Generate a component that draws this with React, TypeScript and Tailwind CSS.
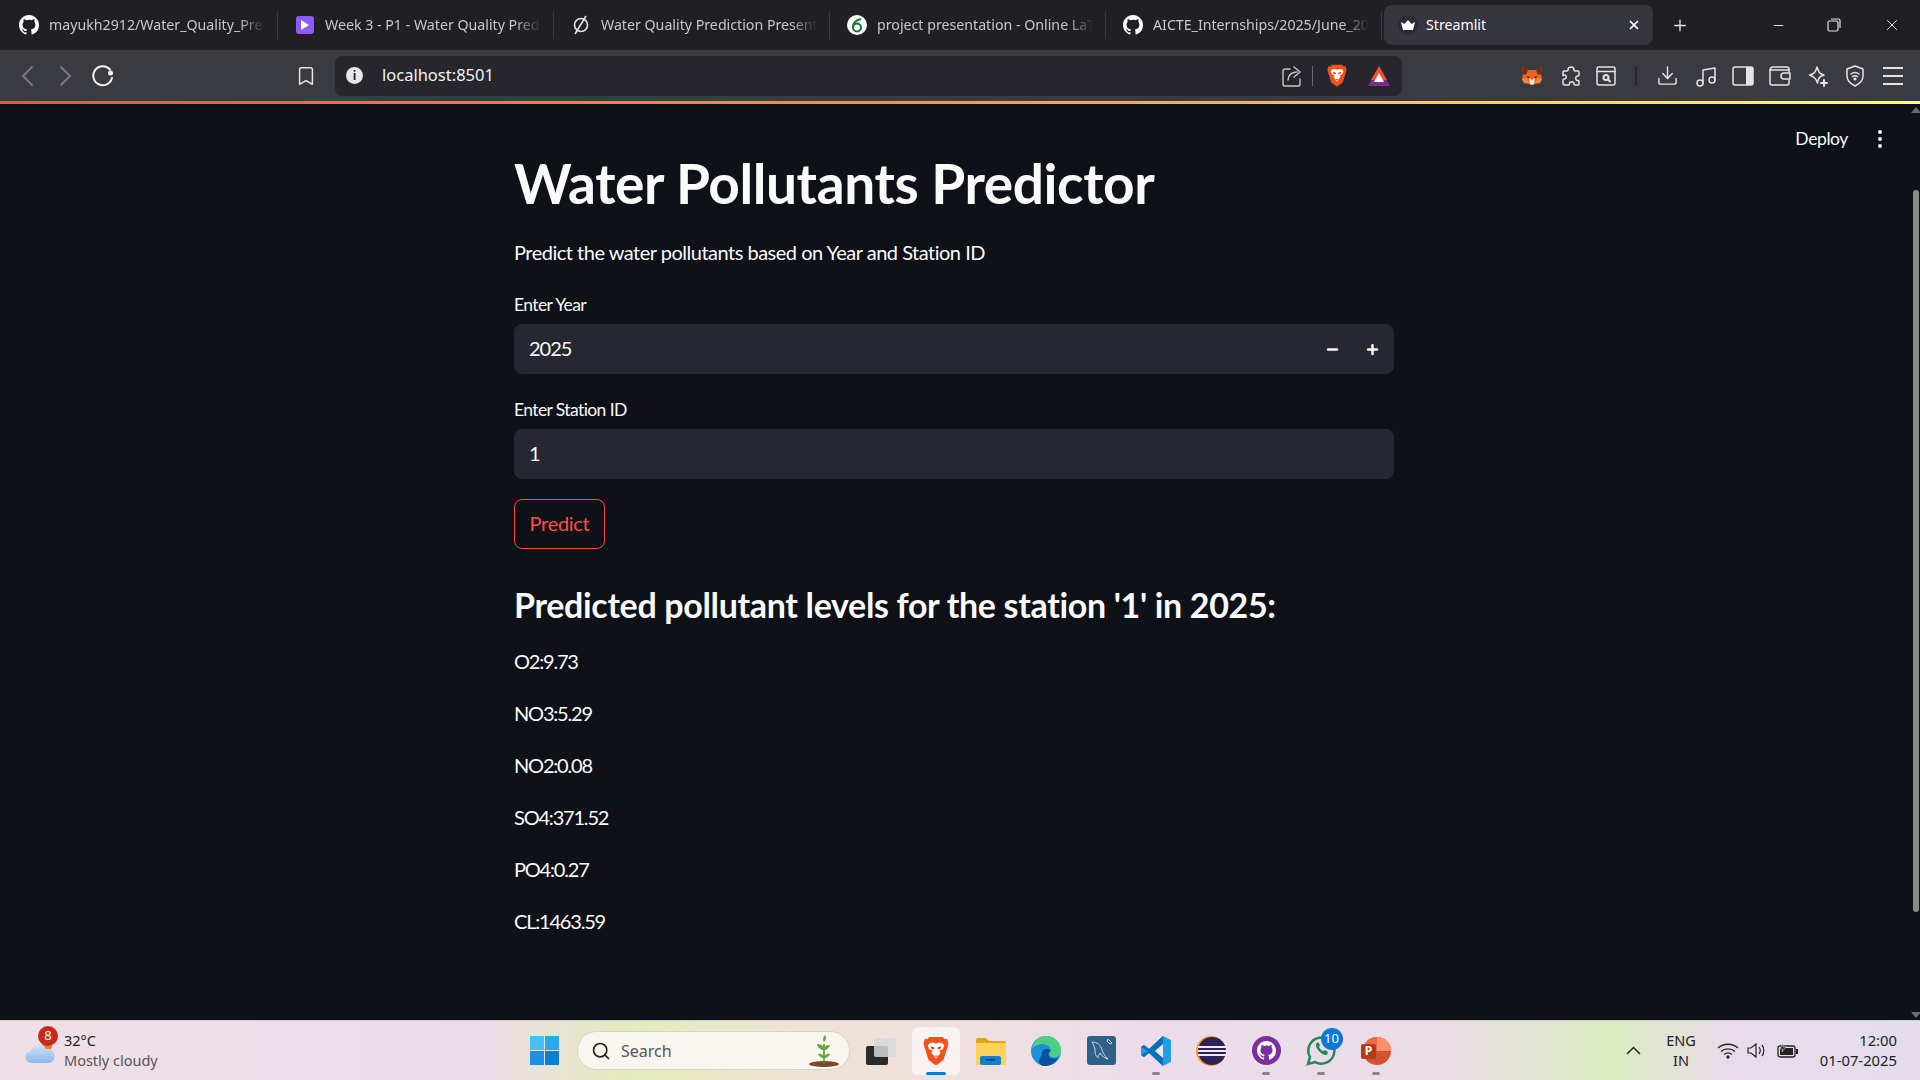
import { Bookmark, Download, Minus, Plus, Search, X } from "lucide-react";
import type { ReactNode } from "react";

const ui = "font-['Noto_Sans',sans-serif]";
const pollutants = ["O2:9.73", "NO3:5.29", "NO2:0.08", "SO4:371.52", "PO4:0.27", "CL:1463.59"];

function GithubMark({ size = 20 }: { size?: number }) {
  return (
    <svg width={size} height={size} viewBox="0 0 16 16" fill="#fff">
      <path d="M8 0C3.58 0 0 3.58 0 8c0 3.54 2.29 6.53 5.47 7.59.4.07.55-.17.55-.38v-1.34c-2.23.48-2.7-1.07-2.7-1.07-.36-.92-.89-1.17-.89-1.17-.73-.5.05-.49.05-.49.8.06 1.23.82 1.23.82.72 1.22 1.87.87 2.33.66.07-.52.28-.87.51-1.07-1.78-.2-3.64-.89-3.64-3.95 0-.87.31-1.59.82-2.15-.08-.2-.36-1.02.08-2.12 0 0 .67-.21 2.2.82A7.6 7.6 0 0 1 8 3.87c.68 0 1.36.09 2 .27 1.53-1.04 2.2-.82 2.2-.82.44 1.1.16 1.92.08 2.12.51.56.82 1.27.82 2.15 0 3.07-1.87 3.75-3.65 3.95.29.25.54.73.54 1.48v2.2c0 .21.15.46.55.38A8 8 0 0 0 16 8c0-4.42-3.58-8-8-8z" />
    </svg>
  );
}

function BraveLogo({ size = 24 }: { size?: number }) {
  return (
    <svg width={size} height={size * 1.14} viewBox="0 0 28 32">
      <path d="M7 1h14l2.500 2.500L26 3l1.500 5-1 4-4.500 14-8 6-8-6L1.500 12l-1-4L2 3l2.500.5z" fill="#f4501e" />
      <path d="M14 8l3-1 4 .5 2 3-2 4-3.500 1.500 1.500 2-4 5-1 2-1-2-4-5 1.500-2L7 14.500l-2-4 2-3 4-.5z" fill="#fff" />
      <path d="M8 11l4 1 .5 2-3 .5zM20 11l-4 1-.5 2 3 .5z" fill="#f4501e" />
      <path d="M12 21h4l-2 2z" fill="#f4501e" />
    </svg>
  );
}

function TabIcon({ kind }: { kind: string }) {
  if (kind === "github") return <GithubMark />;
  if (kind === "video")
    return (
      <span className="flex h-[18px] w-[18px] items-center justify-center rounded-[3px] bg-[#8b5cf6]">
        <svg width="10" height="12" viewBox="0 0 10 12">
          <path d="M1 1l8 5-8 5z" fill="#fff" />
        </svg>
      </span>
    );
  if (kind === "slash")
    return (
      <svg width="20" height="22" viewBox="0 0 20 22" fill="none" stroke="#e5e5e5" strokeWidth="1.6">
        <circle cx="10" cy="11" r="6.500" />
        <path d="M15 2L4 20" />
      </svg>
    );
  if (kind === "overleaf")
    return (
      <span className="flex h-5 w-5 items-center justify-center rounded-full bg-white">
        <svg width="12" height="15" viewBox="0 0 12 15" fill="none" stroke="#13773a" strokeWidth="2">
          <circle cx="6" cy="9.500" r="4" />
          <path d="M10 1C5 2 2 5 2 9.500" />
        </svg>
      </span>
    );
  return (
    <span className="flex h-5 w-5 items-center justify-center rounded-full bg-[#2b2c38]">
      <svg width="14" height="10" viewBox="0 0 14 10">
        <path d="M0 2l3.500 2L7 0l3.500 4L14 2l-2 8H2z" fill="#fff" />
      </svg>
    </span>
  );
}

function Tab({ icon, title, active }: { icon: string; title: string; active?: boolean }) {
  if (active) {
    return (
      <div className="ml-[2px] flex h-10 w-[269px] items-center rounded-lg bg-[#36363f] pl-[14px] pr-3">
        <TabIcon kind={icon} />
        <span className="ml-2 flex-1 text-[14.200px] text-white">{title}</span>
        <X size={14} strokeWidth={3} color="#fff" />
      </div>
    );
  }
  return (
    <div className="flex h-[28px] w-[276px] items-center border-r border-[#3a3a42] pl-[17px] pr-[12px]">
      <span className="flex w-5 shrink-0 justify-center">
        <TabIcon kind={icon} />
      </span>
      <span className="ml-[10px] overflow-hidden whitespace-nowrap text-[14.200px] text-[#c8c8cc] [mask-image:linear-gradient(to_right,black_88%,transparent)]">
        {title}
      </span>
    </div>
  );
}

function Slot({ children }: { children: ReactNode }) {
  return <span className="flex w-[37.500px] shrink-0 justify-center">{children}</span>;
}

function Fox() {
  return (
    <svg width="22" height="21" viewBox="0 0 22 21">
      <path d="M1 1l6 4h8l6-4-1 8 1 5-2 4-5 1-3 1-3-1-5-1-2-4 1-5z" fill="#f0641f" />
      <path d="M1 1l6 4-2 5-3-1zM21 1l-6 4 2 5 3-1z" fill="#6e2c10" />
      <path d="M8 13l3 2 3-2-1 6-2 1-2-1z" fill="#f6e6d8" />
      <path d="M6 11l3 1-2 1.500zM16 11l-3 1 2 1.500z" fill="#2a2018" />
      <path d="M1 14l5-1 2 5-5 0zM21 14l-5-1-2 5 5 0z" fill="#f58a3a" />
    </svg>
  );
}

function ToolbarIcons() {
  const stroke = { fill: "none", stroke: "#e4e4e8", strokeWidth: 1.500, strokeLinecap: "round" as const, strokeLinejoin: "round" as const };
  return (
    <div className="ml-[111px] flex items-center">
      <Slot>
        <Fox />
      </Slot>
      <Slot>
        <span className="ml-[3px] flex">
          <svg width="22" height="22" viewBox="0 0 22 22" {...stroke}>
            <path d="M8 5c0-4 6-4 6 0 0 1 .5 1 1 1h3c1 0 1 1 1 1v3c0 1-.5 1-1 1-3-.5-3 5 0 4.500 .5 0 1 .5 1 1V19c0 1-1 1-1 1h-3c-1 0-1-.5-1-1 .5-3-5-3-4.500 0 0 .5-.5 1-1 1H5c-1 0-2-1-2-2v-3c0-1 .5-1 1-1 3 .5 3-4.500 0-4C3.500 11 3 11 3 10V7c0-1 1-1 1-1h3c.5 0 1 0 1-1z" />
          </svg>
        </span>
      </Slot>
      <span className="flex w-[36px] shrink-0 justify-center">
        <svg width="22" height="22" viewBox="0 0 22 22" {...stroke}>
          <rect x="2" y="2" width="18" height="18" rx="2" />
          <path d="M2 6.500h18" />
          <circle cx="11" cy="12.500" r="2.500" strokeWidth="2" />
          <path d="M13 14.500l2 2" strokeWidth="2" />
        </svg>
      </span>
      <span className="ml-[11px] mr-[12px] h-5 w-[2px] bg-[#26262b]" />
      <Slot>
        <Download size={23} color="#e4e4e8" strokeWidth={1.500} />
      </Slot>
      <Slot>
        <span className="ml-[2px] flex">
          <svg width="22" height="22" viewBox="0 0 22 22" {...stroke}>
            <circle cx="5" cy="18" r="3" />
            <circle cx="17" cy="15" r="3" />
            <path d="M8 18V5l12-2v12" />
          </svg>
        </span>
      </Slot>
      <Slot>
        <svg width="22" height="20" viewBox="0 0 22 20">
          <rect x="1" y="1" width="20" height="18" rx="2" fill="none" stroke="#e4e4e8" strokeWidth="1.500" />
          <path d="M14 1h5a2 2 0 0 1 2 2v14a2 2 0 0 1-2 2h-5z" fill="#e4e4e8" />
        </svg>
      </Slot>
      <Slot>
        <svg width="22" height="20" viewBox="0 0 22 20" {...stroke}>
          <path d="M20 4V3a2 2 0 0 0-2-2H4a3 3 0 0 0-3 3v13a2 2 0 0 0 2 2h15a2 2 0 0 0 2-2v-3" />
          <path d="M1 4h19v3M21 7h-6a2.500 2.500 0 0 0 0 6h6z" />
        </svg>
      </Slot>
      <Slot>
        <svg width="22" height="22" viewBox="0 0 22 22" {...stroke}>
          <path d="M10 2l2 5c.5 1.500 1.500 2 5 3-3 1-6 2-6.500 8-1-3-2-6-8-8 5-1 6-3 7.500-8z" />
          <path d="M17 15v6M14 18h6" strokeWidth="2" />
        </svg>
      </Slot>
      <Slot>
        <svg width="20" height="22" viewBox="0 0 20 22" {...stroke}>
          <path d="M10 1l8 3v7c0 5-4 8-8 10-4-2-8-5-8-10V4z" />
          <path d="M6 9c2.500-2 5.500-2 8 0M7.500 11.500c1.500-1 3.500-1 5 0" />
          <circle cx="10" cy="14" r=".8" fill="#e4e4e8" />
        </svg>
      </Slot>
      <Slot>
        <span className="flex h-[18px] w-5 flex-col justify-between">
          <span className="h-0.5 w-full bg-[#e4e4e8]" />
          <span className="h-0.5 w-full bg-[#e4e4e8]" />
          <span className="h-0.5 w-full bg-[#e4e4e8]" />
        </span>
      </Slot>
    </div>
  );
}

function BrowserChrome() {
  return (
    <header className={`${ui} shrink-0`}>
      <div className="flex h-[50px] items-center bg-[#1f1f24] pl-[2px]">
        <Tab icon="github" title="mayukh2912/Water_Quality_Prediction" />
        <Tab icon="video" title="Week 3 - P1 - Water Quality Prediction" />
        <Tab icon="slash" title="Water Quality Prediction Presentation" />
        <Tab icon="overleaf" title="project presentation - Online LaTeX Editor" />
        <Tab icon="github" title="AICTE_Internships/2025/June_2025_Batch" />
        <Tab icon="crown" title="Streamlit" active />
        <span className="ml-[18px] flex w-[18px] justify-center">
          <Plus size={19} color="#e6e6e6" strokeWidth={1.800} />
        </span>
        <span className="ml-[69px] flex w-[40px] justify-center">
          <Minus size={15} color="#e6e6e6" strokeWidth={1.500} />
        </span>
        <span className="ml-[16px] flex w-[40px] justify-center">
          <svg width="14" height="14" viewBox="0 0 14 14" fill="none" stroke="#e6e6e6" strokeWidth="1.200">
            <rect x="1" y="3" width="10" height="10" rx="1.500" />
            <path d="M4 1h7.500A1.500 1.500 0 0 1 13 2.500V10" />
          </svg>
        </span>
        <span className="ml-[18px] flex w-[40px] justify-center">
          <X size={18} color="#e6e6e6" strokeWidth={1.300} />
        </span>
      </div>
      <div className="flex h-[51px] items-center bg-[#3a3a41] pl-[9px]">
        <Slot>
          <svg width="13" height="22" viewBox="0 0 13 22" fill="none" stroke="#77777d" strokeWidth="2">
            <path d="M11.500 1.500L2 11l9.500 9.500" />
          </svg>
        </Slot>
        <Slot>
          <svg width="13" height="22" viewBox="0 0 13 22" fill="none" stroke="#77777d" strokeWidth="2">
            <path d="M1.500 1.500L11 11l-9.500 9.500" />
          </svg>
        </Slot>
        <Slot>
          <svg width="22" height="22" viewBox="0 0 22 22" fill="none" stroke="#f4f4f4" strokeWidth="2" strokeLinecap="round">
            <path d="M18 4.500A9.500 9.500 0 1 0 20 13" />
            <circle cx="18.500" cy="8" r="2.500" fill="#f4f4f4" stroke="none" />
          </svg>
        </Slot>
        <span className="ml-[166px] flex w-[37.500px] justify-center">
          <Bookmark size={22} color="#e6e6e6" strokeWidth={1.600} />
        </span>
        <div className="ml-[10px] flex h-10 w-[1067px] items-center rounded-lg bg-[#26262c] pl-[11px] pr-[12px]">
          <span className="flex h-[17px] w-[17px] items-center justify-center rounded-full bg-[#e8e8e8] text-[12px] font-bold leading-none text-[#26262c]">
            i
          </span>
          <span className="ml-[19px] flex-1 text-[16.500px] text-[#f2f2f2]">localhost:8501</span>
          <svg width="20" height="22" viewBox="0 0 20 22" fill="none" stroke="#c9c9cc" strokeWidth="1.400" strokeLinecap="round" strokeLinejoin="round">
            <path d="M8 4H3a2 2 0 0 0-2 2v13a2 2 0 0 0 2 2h13a2 2 0 0 0 2-2v-5" />
            <path d="M6 15c0-5 4-8 9-8M12 2l6 5-6 5" />
          </svg>
          <span className="ml-[10px] h-5 w-px bg-[#6a6a70]" />
          <span className="ml-[14px] flex">
            <BraveLogo size={20} />
          </span>
          <span className="ml-[21px] flex">
            <svg width="22" height="20" viewBox="0 0 22 20">
              <path d="M11 0L0 20h22z" fill="#7b2d8b" />
              <path d="M11 0L3 14h16z" fill="#f1502f" />
              <path d="M11 7l-5 9h10z" fill="#fff" />
            </svg>
          </span>
        </div>
        <ToolbarIcons />
      </div>
      <div className="h-[3px] bg-[linear-gradient(to_right,#ff4b4b,#ff8c5a_45%,#ffc766_75%,#fffd80)]" />
    </header>
  );
}

function Field({ label, value, stepper }: { label: string; value: string; stepper?: boolean }) {
  return (
    <div className="mb-[22px]">
      <div className="mb-[6px] h-[27px] text-[17.500px] leading-[27px] tracking-[-0.6px] text-[#fafafa]">{label}</div>
      <div className="flex h-[50px] items-center rounded-lg bg-[#262730] pl-[15px] pr-[14px] text-[20px] tracking-[-1px] text-[#fafafa]">
        <span className="flex-1 pb-[2px]">{value}</span>
        {stepper && (
          <>
            <Minus size={15} strokeWidth={4} color="#fafafa" />
            <span className="ml-[25px]">
              <Plus size={15} strokeWidth={4} color="#fafafa" />
            </span>
          </>
        )}
      </div>
    </div>
  );
}

function StreamlitPage() {
  return (
    <main className="relative flex min-h-0 flex-1 bg-[#0e1117] font-['Lato',sans-serif] text-[#fafafa]">
      <div className="flex-1 pl-[514px]">
        <div className="w-[880px]">
          <h1 className="mt-[39px] h-[80px] text-[55px] font-bold leading-[80px] tracking-[-0.4px]">Water Pollutants Predictor</h1>
          <p className="mt-[14px] h-[30px] text-[20px] leading-[30px] tracking-[-0.5px]">Predict the water pollutants based on Year and Station ID</p>
          <div className="mt-[24px]">
            <Field label="Enter Year" value="2025" stepper />
            <Field label="Enter Station ID" value="1" />
          </div>
          <button className="-mt-[2px] flex h-[50px] w-[91px] items-center justify-center rounded-lg border border-[#ff4b4b] pb-[2px] text-[20px] tracking-[-0.3px] text-[#ff4b4b]">
            Predict
          </button>
          <h3 className="mt-[29px] h-[54px] text-[34px] font-bold leading-[54px] tracking-[-0.34px]">Predicted pollutant levels for the station '1' in 2025:</h3>
          <div className="mt-[14px] flex flex-col gap-[22px]">
            {pollutants.map((row) => (
              <p key={row} className="h-[30px] text-[20px] leading-[30px] tracking-[-1.200px]">
                {row}
              </p>
            ))}
          </div>
        </div>
      </div>
      <div className="absolute right-0 top-0 flex h-full w-[9px] flex-col items-center">
        <span className="mt-[3px] h-0 w-0 border-x-[5px] border-b-[6px] border-x-transparent border-b-[#6b6b6b]" />
        <span className="mt-[77px] h-[722px] w-[6px] rounded-full bg-[#8a8a8a]" />
        <span className="mt-auto mb-[2px] h-0 w-0 border-x-[5px] border-t-[6px] border-x-transparent border-t-[#6b6b6b]" />
      </div>
      <div className="absolute right-[38px] top-[20px] flex items-center">
        <span className="text-[17.500px] leading-[30px] tracking-[-0.4px]">Deploy</span>
        <span className="ml-[30px] flex flex-col gap-[3px]">
          <span className="h-1 w-1 rounded-full bg-[#fafafa]" />
          <span className="h-1 w-1 rounded-full bg-[#fafafa]" />
          <span className="h-1 w-1 rounded-full bg-[#fafafa]" />
        </span>
      </div>
    </main>
  );
}

function AppIcon({ children, dot, active }: { children: ReactNode; dot?: boolean; active?: boolean }) {
  return (
    <div className={`relative flex h-12 w-[48px] shrink-0 items-center justify-center rounded-md ${active ? "bg-[#f8f2f3]" : ""}`}>
      {children}
      {dot && <span className="absolute bottom-[0px] left-[20px] h-[3px] w-2 rounded-full bg-[#8a8585]" />}
      {active && <span className="absolute bottom-[0px] left-[14px] h-[3px] w-5 rounded-full bg-[#0f7bd6]" />}
    </div>
  );
}

function Taskbar() {
  return (
    <footer className="flex h-[60px] shrink-0 items-center border-t border-[#d8d0d4] bg-[linear-gradient(to_right,#efdfe6,#ecdcea_25%,#e3ebb8_33%,#efe3d6_42%,#ecdcea_60%,#e9dde6_75%,#dcebc0_84%,#e8dcea_90%,#e4dcee)] font-['Noto_Sans',sans-serif]">
      <div className="relative ml-[25px] mb-[16px] h-[22px] w-[31px] self-end">
        <svg width="31" height="22" viewBox="0 0 31 22">
          <defs>
            <linearGradient id="cloud" x1="0" y1="0" x2="0" y2="1">
              <stop offset="0" stopColor="#cfe2fa" />
              <stop offset="1" stopColor="#8fb6ea" />
            </linearGradient>
          </defs>
          <circle cx="22" cy="4" r="5" fill="#ee7c1e" />
          <path d="M7 21a6 6 0 0 1-1-12 8 8 0 0 1 15-2 7 7 0 0 1 3 14z" fill="url(#cloud)" />
        </svg>
        <span className="absolute -top-[16px] left-[13px] flex h-5 w-5 items-center justify-center rounded-full bg-[#c42b1c] text-[13px] text-white">8</span>
      </div>
      <div className="ml-[8px] mb-[2px] w-[150px] text-[14.500px] leading-[20px]">
        <div className="text-[#222]">32°C</div>
        <div className="text-[#555]">Mostly cloudy</div>
      </div>
      <div className="ml-[316px] grid h-[29px] w-[29px] grid-cols-2 gap-[1px]">
        <span className="bg-[#45c0f5]" />
        <span className="bg-[#2ba8ee]" />
        <span className="bg-[#1a90e6]" />
        <span className="bg-[#0b7fd8]" />
      </div>
      <div className="ml-[18px] flex h-[39px] w-[273px] items-center rounded-full border border-[#d6d6c6] bg-[#f8f6ee] pl-[13px] pr-[8px]">
        <Search size={20} color="#1f1f1f" strokeWidth={2} />
        <span className="ml-[10px] flex-1 text-[16px] text-[#555]">Search</span>
        <svg width="34" height="34" viewBox="0 0 34 34">
          <ellipse cx="17" cy="30" rx="15" ry="3" fill="#7a4a2a" />
          <path d="M17 30V10" stroke="#4d8a2e" strokeWidth="1.500" />
          <path d="M17 8c-2-3 0-6 1-7 1 2 2 4-1 7zM17 16c-3 0-6-2-7-6 4 0 7 2 7 6zM17 16c3 0 5-2 6-5-4 0-6 1-6 5zM17 24c-3 0-5-2-6-4 3-1 6 1 6 4zM17 24c3 0 5-2 6-4-3-1-6 1-6 4z" fill="#62a83c" />
        </svg>
      </div>
      <div className="ml-[7px] flex items-center gap-[7px]">
        <AppIcon>
          <svg width="30" height="28" viewBox="0 0 30 28">
            <rect x="0" y="9" width="22" height="19" rx="2" fill="#2a2a2a" />
            <rect x="8" y="1" width="22" height="19" rx="2" fill="#d8d8d8" fillOpacity="0.85" />
          </svg>
        </AppIcon>
        <AppIcon active>
          <BraveLogo size={26} />
        </AppIcon>
        <AppIcon>
          <svg width="30" height="28" viewBox="0 0 30 28">
            <path d="M0 3a2 2 0 0 1 2-2h8l3 3h15a2 2 0 0 1 2 2v2H0z" fill="#e0a516" />
            <path d="M0 6h30v22H0z" fill="#fdd256" />
            <rect x="4" y="19" width="21" height="9" rx="2" fill="#0f7fce" />
            <rect x="10" y="22" width="9" height="1.500" fill="#063d66" />
          </svg>
        </AppIcon>
        <AppIcon>
          <svg width="30" height="30" viewBox="0 0 30 30">
            <circle cx="15" cy="15" r="15" fill="#1f8fd8" />
            <path d="M15 0a15 15 0 0 1 15 15c0 5-5 7-9 6-4-1-3-5-1-6 0-4-4-7-8-7S3 10 1 13A15 15 0 0 1 15 0z" fill="#4fd07f" />
            <path d="M11 19a5 5 0 0 1 9-4c-3 1-4 5 0 7 3 1 5 1 7 0a15 15 0 0 1-15 8C6 29 8 22 11 19z" fill="#0b4f9e" />
          </svg>
        </AppIcon>
        <AppIcon>
          <svg width="29" height="29" viewBox="0 0 29 29">
            <rect width="29" height="29" rx="3" fill="#2f6188" />
            <path d="M5 6c5 0 9 3 10 8 1 3 3 6 6 9-4-1-6-3-8-6-1 2-2 3-2 5-3-3-3-6-3-9C7 10 6 8 5 6zM21 3l4 4-2 1-3-3z" fill="none" stroke="#cfdce6" strokeWidth="1" />
          </svg>
        </AppIcon>
        <AppIcon dot>
          <svg width="30" height="30" viewBox="0 0 30 30">
            <path d="M22 0l8 4v22l-8 4L8 17l-5 4-3-2V11l3-2 5 4z" fill="#1e9fe8" />
            <path d="M22 0v30L8 17l-5 4-3-2 7-4-7-4 3-2 5 4z" fill="#0a6fb8" />
            <path d="M22 8v14l-8-7z" fill="#efe7ec" />
          </svg>
        </AppIcon>
        <AppIcon>
          <svg width="30" height="30" viewBox="0 0 30 30">
            <circle cx="15" cy="15" r="15" fill="#f29a2a" />
            <circle cx="16" cy="15" r="14" fill="#2c2255" />
            <path d="M2 11h28M2 15h28M2 19h28" stroke="#efeaf5" strokeWidth="2" />
          </svg>
        </AppIcon>
        <AppIcon dot>
          <span className="flex h-[29px] w-[29px] items-center justify-center rounded-full bg-[#7b2e9e]">
            <GithubMark size={19} />
          </span>
        </AppIcon>
        <AppIcon dot>
          <span className="relative flex">
            <svg width="31" height="31" viewBox="0 0 31 31" fill="none" stroke="#1f8a55" strokeWidth="2.500">
              <path d="M2 29l2-7a13 13 0 1 1 5 5z" />
              <path d="M10 9c-1 4 6 12 11 11l1-3-3-2-2 1c-2-1-3-2-4-4l1-2-2-3z" fill="#1f8a55" stroke="none" />
            </svg>
            <span className="absolute -right-[6px] -top-[7px] flex h-[22px] w-[22px] items-center justify-center rounded-full bg-[#0a78d4] text-[13px] text-white">10</span>
          </span>
        </AppIcon>
        <AppIcon dot>
          <span className="relative flex">
            <svg width="30" height="30" viewBox="0 0 30 30">
              <circle cx="16" cy="15" r="14" fill="#d35230" />
              <path d="M16 1a14 14 0 0 1 14 14H16z" fill="#ff8f6b" />
              <path d="M16 1a14 14 0 0 0-14 14h14z" fill="#ed6c47" />
            </svg>
            <span className="absolute left-0 top-[8px] flex h-[15px] w-[15px] items-center justify-center rounded-[2px] bg-[#b8381a] text-[12px] font-bold leading-none text-white">P</span>
          </span>
        </AppIcon>
      </div>
      <div className="ml-auto flex items-center pr-[23px]">
        <svg width="15" height="9" viewBox="0 0 15 9" fill="none" stroke="#222" strokeWidth="1.500">
          <path d="M1 8l6.500-6.500L14 8" />
        </svg>
        <div className="ml-[19px] mb-[2px] w-[42px] text-center text-[14.500px] leading-[20px] text-[#222]">
          <div>ENG</div>
          <div>IN</div>
        </div>
        <svg className="ml-[15px]" width="22" height="16" viewBox="0 0 22 16" fill="none" stroke="#222" strokeWidth="1.300">
          <path d="M1 5c5.500-5 14.500-5 20 0M4 8.500c4-3.500 10-3.500 14 0M7 11.500c2.500-2 5.500-2 8 0" />
          <circle cx="11" cy="14" r="1" fill="#222" />
        </svg>
        <svg className="ml-[8px]" width="21" height="17" viewBox="0 0 21 17" fill="none" stroke="#222" strokeWidth="1.200">
          <path d="M1 6h3l5-4v13l-5-4H1zM12 5c1.500 2 1.500 5 0 7M15 3c2.500 3 2.500 8 0 11" />
        </svg>
        <svg className="ml-[9px]" width="22" height="16" viewBox="0 0 22 16">
          <rect x="1" y="3" width="17" height="11" rx="2" fill="none" stroke="#222" strokeWidth="1.300" />
          <rect x="3" y="5" width="13" height="7" fill="#222" />
          <rect x="19" y="6" width="2" height="5" fill="#222" />
          <path d="M6 0L3 6h3L5 9l4-5H6z" fill="#222" stroke="#e9dde6" strokeWidth=".6" />
        </svg>
        <div className="ml-[18px] mb-[2px] w-[80px] text-right text-[14.800px] leading-[20px] text-[#222]">
          <div>12:00</div>
          <div>01-07-2025</div>
        </div>
      </div>
    </footer>
  );
}

export default function App() {
  return (
    <div className="flex h-[1080px] w-[1920px] flex-col overflow-hidden">
      <BrowserChrome />
      <StreamlitPage />
      <Taskbar />
    </div>
  );
}
